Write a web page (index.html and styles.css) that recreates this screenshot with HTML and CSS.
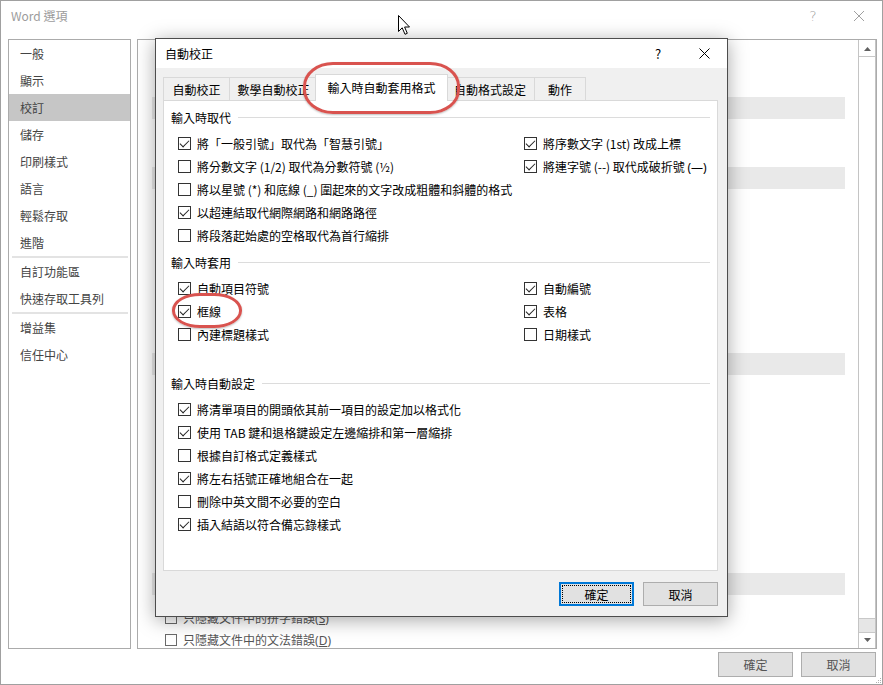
FILE: index.html
```html
<!DOCTYPE html>
<html lang="zh-Hant">
<head>
<meta charset="utf-8">
<title>Word 選項</title>
<link rel="stylesheet" href="styles.css">
</head>
<body>
<div class="window">
  <div class="titlebar">
    <span class="win-title">Word 選項</span>
    <span class="cap cap-help">?</span>
    <span class="cap"><svg width="12" height="12" viewBox="0 0 12 12"><path d="M1 1 L11 11 M11 1 L1 11" stroke="#a0a0a0" stroke-width="1" fill="none"/></svg></span>
  </div>
  <div class="main">
    <nav class="sidebar">
      <div class="nav-item">一般</div>
      <div class="nav-item">顯示</div>
      <div class="nav-item selected">校訂</div>
      <div class="nav-item">儲存</div>
      <div class="nav-item">印刷樣式</div>
      <div class="nav-item">語言</div>
      <div class="nav-item">輕鬆存取</div>
      <div class="nav-item">進階</div>
      <div class="nav-sep"></div>
      <div class="nav-item">自訂功能區</div>
      <div class="nav-item">快速存取工具列</div>
      <div class="nav-sep"></div>
      <div class="nav-item">增益集</div>
      <div class="nav-item">信任中心</div>
    </nav>
    <div class="content">
      <div class="content-scroll">
        <div class="band band1"></div>
        <div class="band band2"></div>
        <div class="band band3"></div>
        <div class="band band4"></div>
        <div class="bg-row bg-row-first"><span class="bg-box"></span><span>只隱藏文件中的拼字錯誤<span class="latin">(<u>S</u>)</span></span></div>
        <div class="bg-row"><span class="bg-box"></span><span>只隱藏文件中的文法錯誤<span class="latin">(<u>D</u>)</span></span></div>
      </div>
      <div class="scrollbar">
        <div class="sb-btn"><svg width="7" height="4" viewBox="0 0 7 4"><path d="M0 4 L3.5 0 L7 4 Z" fill="#606060"/></svg></div>
        <div class="sb-thumb"></div>
        <div class="sb-track"></div>
        <div class="sb-btn sb-down"><svg width="7" height="4" viewBox="0 0 7 4"><path d="M0 0 L3.5 4 L7 0 Z" fill="#606060"/></svg></div>
      </div>
    </div>
  </div>
  <div class="footer">
    <span class="btn">確定</span>
    <span class="btn">取消</span>
  </div>
</div>

<svg class="grip" width="7" height="7" viewBox="0 0 7 7">
  <rect x="5" y="1" width="1" height="1" fill="#b0b0b0"/>
  <rect x="3" y="3" width="1" height="1" fill="#b0b0b0"/><rect x="5" y="3" width="1" height="1" fill="#b0b0b0"/>
  <rect x="1" y="5" width="1" height="1" fill="#b0b0b0"/><rect x="3" y="5" width="1" height="1" fill="#b0b0b0"/><rect x="5" y="5" width="1" height="1" fill="#b0b0b0"/>
</svg>

<div class="dialog">
  <div class="dlg-title">
    <span class="dlg-title-text">自動校正</span>
    <span class="dcap">?</span>
    <span class="dcap"><svg width="11" height="11" viewBox="0 0 11 11"><path d="M0.5 0.5 L10.5 10.5 M10.5 0.5 L0.5 10.5" stroke="#000" stroke-width="1" fill="none"/></svg></span>
  </div>
  <div class="dlg-body">
    <div class="tabs">
      <span class="tab t1">自動校正</span>
      <span class="tab t2">數學自動校正</span>
      <span class="tab t3 active">輸入時自動套用格式</span>
      <span class="tab t4">自動格式設定</span>
      <span class="tab t5">動作</span>
    </div>
    <div class="panel">
      <div class="sec-head"><span>輸入時取代</span><span class="sec-line"></span></div>
      <div class="cols">
        <div class="col-left">
          <div class="row"><span class="cb on"></span>將「一般引號」取代為「智慧引號」</div>
          <div class="row"><span class="cb"></span>將分數文字 (1/2) 取代為分數符號 (½)</div>
          <div class="row"><span class="cb"></span>將以星號 (*) 和底線 (_) 圍起來的文字改成粗體和斜體的格式</div>
          <div class="row"><span class="cb on"></span>以超連結取代網際網路和網路路徑</div>
          <div class="row"><span class="cb"></span>將段落起始處的空格取代為首行縮排</div>
        </div>
        <div class="col-right">
          <div class="row"><span class="cb on"></span>將序數文字 (1st) 改成上標</div>
          <div class="row"><span class="cb on"></span><span>將連字號 (--) 取代成破折號 <span class="latin">(—)</span></span></div>
        </div>
      </div>

      <div class="sec-head sec2"><span>輸入時套用</span><span class="sec-line"></span></div>
      <div class="cols">
        <div class="col-left">
          <div class="row"><span class="cb on"></span>自動項目符號</div>
          <div class="row"><span class="cb on"></span>框線</div>
          <div class="row"><span class="cb"></span>內建標題樣式</div>
        </div>
        <div class="col-right">
          <div class="row"><span class="cb on"></span>自動編號</div>
          <div class="row"><span class="cb on"></span>表格</div>
          <div class="row"><span class="cb"></span>日期樣式</div>
        </div>
      </div>

      <div class="sec-head sec3"><span>輸入時自動設定</span><span class="sec-line"></span></div>
      <div class="col-single">
        <div class="row"><span class="cb on"></span>將清單項目的開頭依其前一項目的設定加以格式化</div>
        <div class="row"><span class="cb on"></span>使用 TAB 鍵和退格鍵設定左邊縮排和第一層縮排</div>
        <div class="row"><span class="cb"></span>根據自訂格式定義樣式</div>
        <div class="row"><span class="cb on"></span>將左右括號正確地組合在一起</div>
        <div class="row"><span class="cb"></span>刪除中英文間不必要的空白</div>
        <div class="row"><span class="cb on"></span>插入結語以符合備忘錄樣式</div>
      </div>
    </div>
    <div class="dlg-buttons">
      <span class="dbtn default"><span class="focus">確定</span></span>
      <span class="dbtn">取消</span>
    </div>
  </div>
</div>

<div class="annot annot-tab"></div>
<div class="annot annot-border"></div>

<svg class="cursor" width="14" height="22" viewBox="0 0 14 22">
  <path d="M1.5 1.5 L1.5 17.5 L5.2 13.8 L8 20.3 L10.3 19.3 L7.6 13 L12.5 13 Z" fill="#fff" stroke="#000" stroke-width="1" stroke-linejoin="miter"/>
</svg>
</body>
</html>
```

FILE: styles.css
```css
* { box-sizing: border-box; }
html, body { margin: 0; padding: 0; }
body {
  width: 883px;
  height: 685px;
  overflow: hidden;
  position: relative;
  background: #fff;
  font-family: "Noto Sans CJK TC", "Noto Sans", sans-serif;
  font-size: 12px;
  color: #000;
  text-autospace: no-autospace;
}
.latin { font-family: "Noto Sans", "Liberation Sans", sans-serif; }

/* ---------- background window ---------- */
.window {
  width: 883px;
  height: 685px;
  border: 1px solid #a0a0a0;
  display: flex;
  flex-direction: column;
  background: #fff;
}
.titlebar {
  height: 38px;
  flex-shrink: 0;
  display: flex;
  align-items: flex-start;
}
.win-title {
  flex: 1;
  padding-left: 10px;
  line-height: 30px;
  color: #9c9c9c;
  font-size: 12px;
}
.cap {
  width: 46px;
  height: 30px;
  display: flex;
  align-items: center;
  justify-content: center;
  color: #a0a0a0;
}
.cap-help { font-size: 14px; font-family: "DejaVu Sans", sans-serif; font-weight: 300; }

.main {
  height: 610px;
  flex-shrink: 0;
  display: flex;
  gap: 6px;
  padding: 0 5px 0 7px;
}
.sidebar {
  width: 123px;
  border: 1px solid #ababab;
  color: #444;
}
.nav-item {
  height: 27px;
  line-height: 27px;
  padding-left: 11px;
  font-size: 12px;
}
.nav-item.selected { background: #c6c6c6; }
.nav-sep {
  height: 2px;
  margin: 0 2px 0 3px;
  background: #e3e3e3;
}

.content {
  flex: 1;
  border: 1px solid #ababab;
  display: flex;
  overflow: hidden;
}
.content-scroll {
  flex: 1;
  overflow: hidden;
  padding: 0 13px 0 14px;
}
.band { height: 22px; background: #e9e9e9; }
.band1 { margin-top: 57px; }
.band2 { margin-top: 48px; }
.band3 { margin-top: 164px; }
.band4 { margin-top: 198px; }
.bg-row {
  height: 22px;
  display: flex;
  align-items: center;
  gap: 6px;
  padding-left: 13px;
  color: #555;
  white-space: nowrap;
}
.bg-row-first { margin-top: 12px; }
.bg-box {
  width: 12px;
  height: 12px;
  border: 1px solid #6a6a6a;
  background: #fff;
  flex-shrink: 0;
}
.scrollbar {
  width: 18px;
  display: flex;
  flex-direction: column;
  padding: 2px 0 1px;
  border-left: 1px solid #c4c4c4;
  border-right: 1px solid #c4c4c4;
}
.sb-btn {
  height: 15px;
  display: flex;
  align-items: center;
  justify-content: center;
  border-bottom: 1px solid #c8c8c8;
}
.sb-down { border-bottom: none; border-top: 1px solid #c8c8c8; }
.sb-thumb { flex: 1; background: #fff; border-bottom: 1px solid #c8c8c8; }
.sb-track { height: 13px; background: #e6e6e6; }

.footer {
  flex: 1;
  display: flex;
  justify-content: flex-end;
  align-items: flex-start;
  gap: 8px;
  padding: 3px 6px 0 0;
}
.btn {
  width: 75px;
  height: 25px;
  border: 1px solid #adadad;
  background: #e1e1e1;
  color: #555;
  display: flex;
  align-items: center;
  justify-content: center;
}
.grip { position: absolute; right: 1px; bottom: 1px; }

/* ---------- dialog ---------- */
.dialog {
  position: absolute;
  left: 155px;
  top: 38px;
  width: 573px;
  height: 579px;
  border: 1px solid #4d4d4d;
  background: #f0f0f0;
  display: flex;
  flex-direction: column;
  box-shadow: 0 3px 18px rgba(0, 0, 0, 0.35);
}
.dlg-title {
  height: 29px;
  flex-shrink: 0;
  background: #fff;
  display: flex;
  align-items: center;
}
.dlg-title-text { flex: 1; padding-left: 9px; }
.dcap {
  width: 46px;
  height: 29px;
  display: flex;
  align-items: center;
  justify-content: center;
  font-size: 13px;
}
.dlg-body {
  flex: 1;
  display: flex;
  flex-direction: column;
  padding: 0 9px 0 7px;
}
.tabs {
  height: 26px;
  margin-top: 6px;
  display: flex;
  align-items: flex-end;
  position: relative;
  z-index: 2;
}
.tab {
  height: 23px;
  border: 1px solid #d9d9d9;
  border-bottom: none;
  margin-right: -1px;
  display: flex;
  align-items: center;
  justify-content: center;
  background: #f0f0f0;
  white-space: nowrap;
}
.t1 { width: 67px; }
.t2 { width: 89px; }
.t3 { width: 129px; }
.t4 { width: 90px; }
.t5 { width: 52px; }
.tab.active {
  height: 27px;
  margin: 0 -3px -1px -2px;
  width: 133px;
  background: #fff;
  position: relative;
  z-index: 3;
  padding-bottom: 2px;
}
.panel {
  height: 471px;
  flex-shrink: 0;
  border: 1px solid #d9d9d9;
  background: #fff;
  padding: 6px 7px 0 7px;
}
.sec-head {
  height: 21px;
  display: flex;
  align-items: center;
  white-space: nowrap;
}
.sec-line {
  flex: 1;
  height: 1px;
  background: #dcdcdc;
  margin-left: 7px;
}
.sec2 { margin-top: 5px; }
.sec3 { margin-top: 27px; }
.cols {
  display: flex;
  margin-top: 4px;
  padding-left: 7px;
}
.col-left { width: 346px; flex-shrink: 0; }
.col-right { flex: 1; }
.col-single { margin-top: 4px; padding-left: 7px; }
.row {
  height: 23px;
  display: flex;
  align-items: center;
  gap: 6px;
  white-space: nowrap;
}
.cb {
  width: 13px;
  height: 13px;
  border: 1px solid #333;
  background: #fff;
  flex-shrink: 0;
  position: relative;
}
.cb.on::after {
  content: "";
  position: absolute;
  left: 3px;
  top: 0px;
  width: 4px;
  height: 8px;
  border-right: 1px solid #222;
  border-bottom: 1px solid #222;
  transform: rotate(45deg);
}
.dlg-buttons {
  display: flex;
  justify-content: flex-end;
  gap: 9px;
  margin-top: 11px;
  padding-right: 0;
}
.dbtn {
  width: 75px;
  height: 24px;
  border: 1px solid #adadad;
  background: #e1e1e1;
  display: flex;
  align-items: center;
  justify-content: center;
}
.dbtn.default {
  border: 2px solid #0078d7;
  padding: 1px;
}
.focus {
  width: 100%;
  height: 100%;
  border: 1px dotted #000;
  display: flex;
  align-items: center;
  justify-content: center;
}

/* ---------- annotations ---------- */
.annot {
  position: absolute;
  border: 3px solid #d9534f;
  box-shadow: 0 1px 2px rgba(0, 0, 0, 0.25);
  z-index: 5;
}
.annot-tab {
  left: 303px;
  top: 62px;
  width: 157px;
  height: 52px;
  border-radius: 30px / 24px;
}
.annot-border {
  left: 172px;
  top: 293px;
  width: 70px;
  height: 35px;
  border-radius: 28px / 17px;
}
.cursor {
  position: absolute;
  left: 397px;
  top: 14px;
  z-index: 6;
}
```
